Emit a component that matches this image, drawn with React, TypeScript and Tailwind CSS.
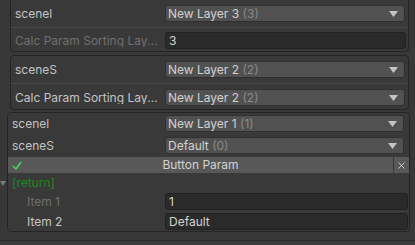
import { X } from "lucide-react";

const font = { fontFamily: "Inter, 'Noto Sans', sans-serif" };

function Dropdown({ value, index }: { value: string; index: number }) {
  return (
    <div className="flex h-[17px] flex-1 items-center justify-between rounded-[3px] border border-[#303030] bg-[#515151] pl-[2px] pr-[6px] text-[12px] leading-none text-[#d2d2d2]">
      <span>
        {value} <span className="text-[#8a8a8a]">({index})</span>
      </span>
      <svg width="9" height="6" viewBox="0 0 9 6">
        <path d="M0 0h9L4.5 6z" fill="#c4c4c4" />
      </svg>
    </div>
  );
}

function TextField({ value }: { value: string }) {
  return (
    <div className="flex h-[17px] flex-1 items-center rounded-[3px] border border-[#212121] bg-[#2a2a2a] pl-[3px] text-[12px] leading-none text-[#d2d2d2]">
      {value}
    </div>
  );
}

function Label({ text, muted, width }: { text: string; muted?: boolean; width: string }) {
  return (
    <div
      className={`${width} shrink-0 truncate pr-[4px] text-[12px] leading-none ${
        muted ? "text-[#6f6f6f]" : "text-[#c4c4c4]"
      }`}
    >
      {text}
    </div>
  );
}

export default function App() {
  return (
    <div style={font} className="h-[245px] w-[415px] overflow-hidden bg-[#383838]">
      {/* first group, top cut off */}
      <div className="-mt-[4px] ml-[10px] w-[399px] rounded-[4px] border border-[#242424] bg-[#393939]">
        <div className="flex items-center pl-[4px] pr-[3px] pt-[8px] pb-[5px]">
          <Label text="scenel" width="w-[150px]" />
          <Dropdown value="New Layer 3" index={3} />
        </div>
        <div className="h-px bg-[#4a4a4a]" />
        <div className="flex items-center pl-[4px] pr-[2px] pt-[4px] pb-[2px]">
          <Label text="Calc Param Sorting Layer Index" muted width="w-[150px]" />
          <TextField value="3" />
        </div>
      </div>

      {/* second group */}
      <div className="ml-[10px] mt-[3px] w-[399px] rounded-[4px] border border-[#242424] bg-[#393939]">
        <div className="flex items-center pl-[4px] pr-[3px] pt-[5px] pb-[5px]">
          <Label text="sceneS" width="w-[150px]" />
          <Dropdown value="New Layer 2" index={2} />
        </div>
        <div className="h-px bg-[#4a4a4a]" />
        <div className="flex items-center pl-[4px] pr-[3px] pt-[5px] pb-[3px]">
          <Label text="Calc Param Sorting Layer Name" width="w-[150px]" />
          <Dropdown value="New Layer 2" index={2} />
        </div>
      </div>

      {/* third group */}
      <div className="relative ml-[7px] mt-[2px] w-[403px] rounded-[4px] border border-[#242424] bg-[#393939]">
        <div className="flex items-center pl-[4px] pr-[5px] pt-[2px]">
          <Label text="scenel" width="w-[153px]" />
          <Dropdown value="New Layer 1" index={1} />
        </div>
        <div className="flex items-center pl-[4px] pr-[5px] pt-[5px]">
          <Label text="sceneS" width="w-[153px]" />
          <Dropdown value="Default" index={0} />
        </div>
        <div className="mt-[3px] flex h-[16px]">
          <div className="relative flex flex-1 items-center justify-center bg-[#585858] text-[12px] leading-none text-[#d2d2d2]">
            <svg className="absolute left-[4px] top-[4px]" width="10" height="9" viewBox="0 0 10 9">
              <path d="M1 5l3 3 5-7" stroke="#3fe05c" strokeWidth="1.4" fill="none" />
            </svg>
            Button Param
          </div>
          <div className="ml-px flex w-[15px] items-center justify-center bg-[#585858]">
            <X size={11} strokeWidth={1.75} color="#e6e6e6" />
          </div>
        </div>
        <div className="flex h-[20px] items-center pl-[4px] text-[12px] leading-none text-[#1b8a1b]">
          [return]
        </div>
        <div className="flex items-center pl-[19px] pr-[1px]">
          <Label text="Item 1" muted width="w-[138px]" />
          <TextField value="1" />
        </div>
        <div className="flex items-center pl-[19px] pr-[1px] pt-[3px] pb-[1px]">
          <Label text="Item 2" width="w-[138px]" />
          <TextField value="Default" />
        </div>
        <svg className="absolute -left-[8px] top-[68px]" width="6" height="6" viewBox="0 0 6 6">
          <path d="M0 0h6L3 5z" fill="#7a7a7a" />
        </svg>
      </div>

      <div className="mt-[8px] h-px bg-[#2a2a2a]" />
      <div className="h-[10px] bg-[#3c3c3c]" />
    </div>
  );
}
